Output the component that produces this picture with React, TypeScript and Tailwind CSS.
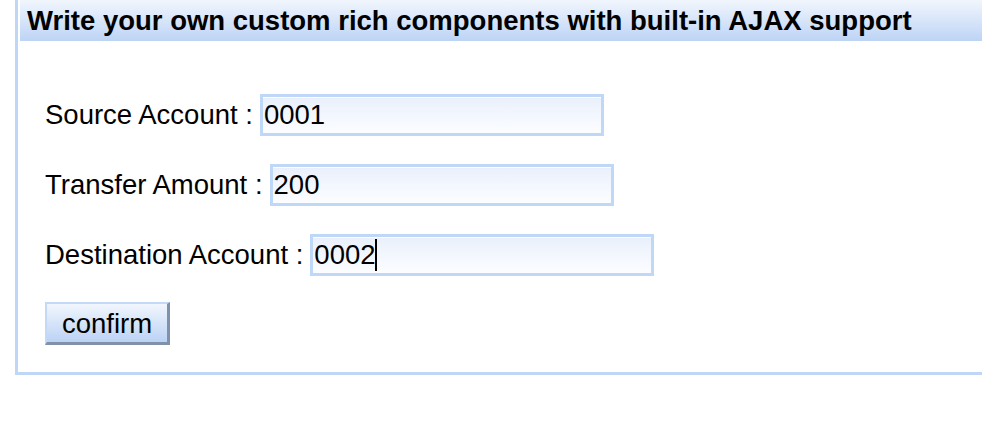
import React, { FC } from 'react';

type Row = { label: string; value: string; caret?: boolean };

const rows: Row[] = [
  { label: 'Source Account :', value: '0001' },
  { label: 'Transfer Amount :', value: '200' },
  { label: 'Destination Account :', value: '0002', caret: true },
];

const Field: FC<Row> = ({ label, value, caret }) => (
  <div className="flex items-center">
    <span className="whitespace-nowrap">{label}</span>
    <div className="relative ml-[7px]">
      <input
        readOnly
        defaultValue={value}
        className="block h-[42px] w-[344px] border-[3px] border-[#c0d8f7] bg-linear-to-b from-[#e9f0fc] to-[#fcfdff] px-[1px] text-[27.5px] text-black shadow-[inset_0_1px_0_#ffffff] outline-none"
      />
      {caret && <span className="absolute left-[65px] top-[5px] h-[32px] w-[1.5px] bg-black" />}
    </div>
  </div>
);

const App: FC = () => {
  return (
    <div className="min-h-[421px] w-full overflow-hidden bg-white font-['Liberation_Sans',Arial,sans-serif] text-[27.5px] text-black">
      <div className="ml-[15px] border-b-[3px] border-l-[3px] border-[#bfd6f6] pb-[27px] pl-[2px]">
        <div className="h-[41px] whitespace-nowrap bg-linear-to-b from-[#f1f6fd] to-[#bdd4f5] pl-[7px] font-bold leading-[41px]">
          Write your own custom rich components with built-in AJAX support
        </div>

        <div className="pl-[25px] pt-[53px]">
          <div className="flex flex-col gap-[28px]">
            {rows.map((r) => (
              <Field key={r.label} {...r} />
            ))}
          </div>

          <button className="mt-[26px] block h-[43px] w-[125px] border-b-[3px] border-l-2 border-r-[3px] border-t-2 border-b-[#8092ab] border-l-[#c4d9f6] border-r-[#8092ab] border-t-[#c4d9f6] bg-linear-to-b from-[#f1f6fd] to-[#bbd2f4] text-[27.5px] leading-[31px] text-black">
            confirm
          </button>
        </div>
      </div>
    </div>
  );
};

export default App;
